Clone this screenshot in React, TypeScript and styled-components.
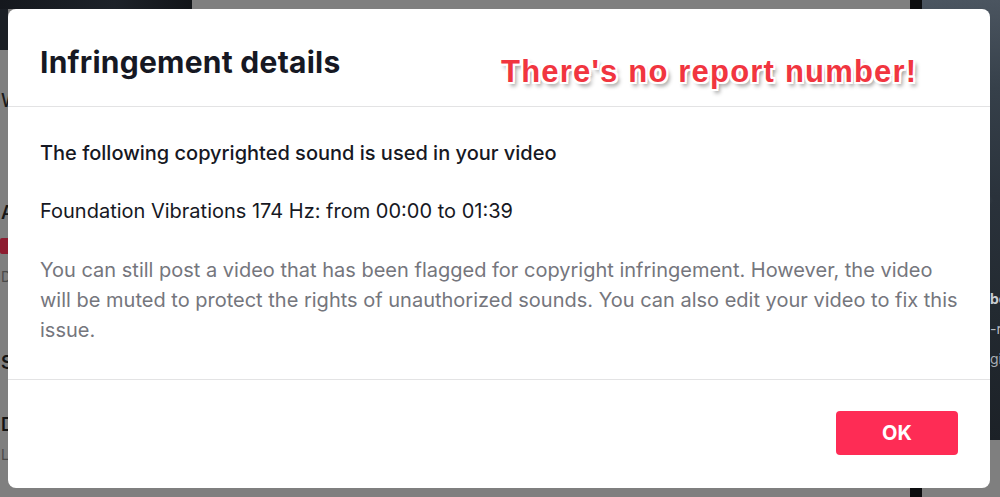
import React from 'react';
import styled, { createGlobalStyle } from 'styled-components';

const Global = createGlobalStyle`
  html, body { margin: 0; padding: 0; }
  body {
    width: 1000px;
    height: 497px;
    overflow: hidden;
    background: #7f7f7f;
    font-family: Inter, "Noto Sans", sans-serif;
  }
`;

const Stage = styled.div`
  position: relative;
  width: 1000px;
  height: 497px;
  overflow: hidden;
  display: flex;
  background: #7f7f7f;
`;

/* ---------- dimmed page behind the dialog ---------- */
const LeftPage = styled.div`
  width: 192px;
  display: flex;
  flex-direction: column;
`;

const TopThumb = styled.div`
  height: 9px;
  width: 192px;
  background: linear-gradient(90deg, #15181d 0%, #1d2229 60%, #121519 100%);
`;

const SideThumb = styled.div`
  width: 8px;
  height: 41px;
  background: #1b1f25;
`;

const PeekText = styled.div<{ $top: number; $color: string; $size: number; $weight: number }>`
  margin-top: ${(p) => p.$top}px;
  margin-left: 1px;
  font-family: Inter, sans-serif;
  font-size: ${(p) => p.$size}px;
  font-weight: ${(p) => p.$weight};
  color: ${(p) => p.$color};
  line-height: 1;
  height: ${(p) => p.$size}px;
`;

const PeekBadge = styled.div`
  margin-top: 16px;
  width: 14px;
  height: 16px;
  border-radius: 2px;
  background: #8d1c30;
`;

const Middle = styled.div`
  flex: 1;
  background: #7f7f7f;
`;

const BlackCol = styled.div`
  width: 12px;
  background: #0c0d0f;
`;

const RightPage = styled.div`
  width: 78px;
  display: flex;
  flex-direction: column;
`;

const RightImage = styled.div`
  height: 440px;
  background:
    radial-gradient(ellipse 40px 18px at 30px 120px, rgba(120,135,150,0.55), transparent 70%),
    radial-gradient(ellipse 30px 14px at 50px 200px, rgba(110,125,140,0.5), transparent 70%),
    radial-gradient(ellipse 45px 20px at 25px 60px, rgba(140,150,160,0.5), transparent 70%),
    linear-gradient(180deg, #4b5560 0%, #36404a 20%, #2a323b 45%, #232a31 70%, #1c2127 100%);
  display: flex;
  flex-direction: column;
  padding-top: 288px;
  padding-left: 68px;
  gap: 8px;
  box-sizing: border-box;
  overflow: hidden;
`;

const RightPeek = styled.div<{ $color: string; $weight: number }>`
  font-family: Inter, sans-serif;
  font-size: 14px;
  line-height: 22px;
  font-weight: ${(p) => p.$weight};
  color: ${(p) => p.$color};
  white-space: nowrap;
`;

const RightBottom = styled.div`
  flex: 1;
  background: #7f7f7f;
`;

/* ---------- dialog ---------- */
const Dialog = styled.div`
  position: absolute;
  left: 8px;
  top: 9px;
  width: 982px;
  height: 479px;
  background: #fff;
  border-radius: 8px;
  display: flex;
  flex-direction: column;
  color: #161823;
`;

const Header = styled.div`
  height: 98px;
  box-sizing: border-box;
  padding: 0 32px;
  display: flex;
  align-items: center;
  border-bottom: 1px solid #e3e3e4;
  position: relative;
`;

const Title = styled.h2`
  margin: 8px 0 0;
  font-family: Inter, sans-serif;
  font-size: 30px;
  font-weight: 700;
  letter-spacing: 0.25px;
  color: #161823;
`;

const Annotation = styled.div`
  position: absolute;
  left: 493px;
  top: 45px;
  font-family: "Liberation Sans", Arial, sans-serif;
  font-weight: 700;
  font-size: 31px;
  letter-spacing: 1.2px;
  color: #f1353f;
  white-space: nowrap;
  text-shadow:
    -2px -2px 0 #fff, 0 -2px 0 #fff, 2px -2px 0 #fff,
    -2px 0 0 #fff, 2px 0 0 #fff,
    -2px 2px 0 #fff, 0 2px 0 #fff, 2px 2px 0 #fff,
    3px 4px 4px rgba(0, 0, 0, 0.45);
`;

const Body = styled.div`
  flex: 1;
  box-sizing: border-box;
  padding: 34px 32px 0;
  border-bottom: 1px solid #e3e3e4;
  display: flex;
  flex-direction: column;
`;

const Lead = styled.p<{ $weight: number; $gap: number }>`
  margin: 0 0 ${(p) => p.$gap}px;
  font-size: 20px;
  line-height: 24px;
  font-weight: ${(p) => p.$weight};
  color: #161823;
`;

const Note = styled.p`
  margin: 0;
  font-size: 20px;
  line-height: 30px;
  font-weight: 400;
  color: #75767d;
`;

const Footer = styled.div`
  height: 108px;
  box-sizing: border-box;
  padding: 31px 32px 0;
  display: flex;
  justify-content: flex-end;
  align-items: flex-start;
`;

const OkButton = styled.button`
  width: 122px;
  height: 44px;
  border: none;
  border-radius: 4px;
  background: #fe2c55;
  color: #fff;
  font-family: Inter, sans-serif;
  font-size: 20px;
  font-weight: 700;
  cursor: pointer;
`;

export default function App() {
  return (
    <>
      <Global />
      <Stage>
        <LeftPage>
          <TopThumb />
          <SideThumb />
          <PeekText $top={42} $color="#1a1a1a" $size={18} $weight={500}>W</PeekText>
          <PeekText $top={94} $color="#161616" $size={18} $weight={600}>A</PeekText>
          <PeekBadge />
          <PeekText $top={16} $color="#4a4a4a" $size={14} $weight={400}>D</PeekText>
          <PeekText $top={70} $color="#141414" $size={18} $weight={600}>S</PeekText>
          <PeekText $top={44} $color="#141414" $size={18} $weight={600}>D</PeekText>
          <PeekText $top={14} $color="#4a4a4a" $size={14} $weight={400}>L</PeekText>
        </LeftPage>
        <Middle />
        <BlackCol />
        <RightPage>
          <RightImage>
            <RightPeek $color="#c9ccd0" $weight={700}>bo</RightPeek>
            <RightPeek $color="#b8bcc1" $weight={400}>-r</RightPeek>
            <RightPeek $color="#a8adb3" $weight={400}>gi</RightPeek>
          </RightImage>
          <RightBottom />
        </RightPage>

        <Dialog>
          <Header>
            <Title>Infringement details</Title>
            <Annotation>There's no report number!</Annotation>
          </Header>
          <Body>
            <Lead $weight={500} $gap={34}>The following copyrighted sound is used in your video</Lead>
            <Lead $weight={400} $gap={32}>Foundation Vibrations 174 Hz: from 00:00 to 01:39</Lead>
            <Note>
              You can still post a video that has been flagged for copyright infringement. However, the video
              will be muted to protect the rights of unauthorized sounds. You can also edit your video to fix this
              issue.
            </Note>
          </Body>
          <Footer>
            <OkButton>OK</OkButton>
          </Footer>
        </Dialog>
      </Stage>
    </>
  );
}
